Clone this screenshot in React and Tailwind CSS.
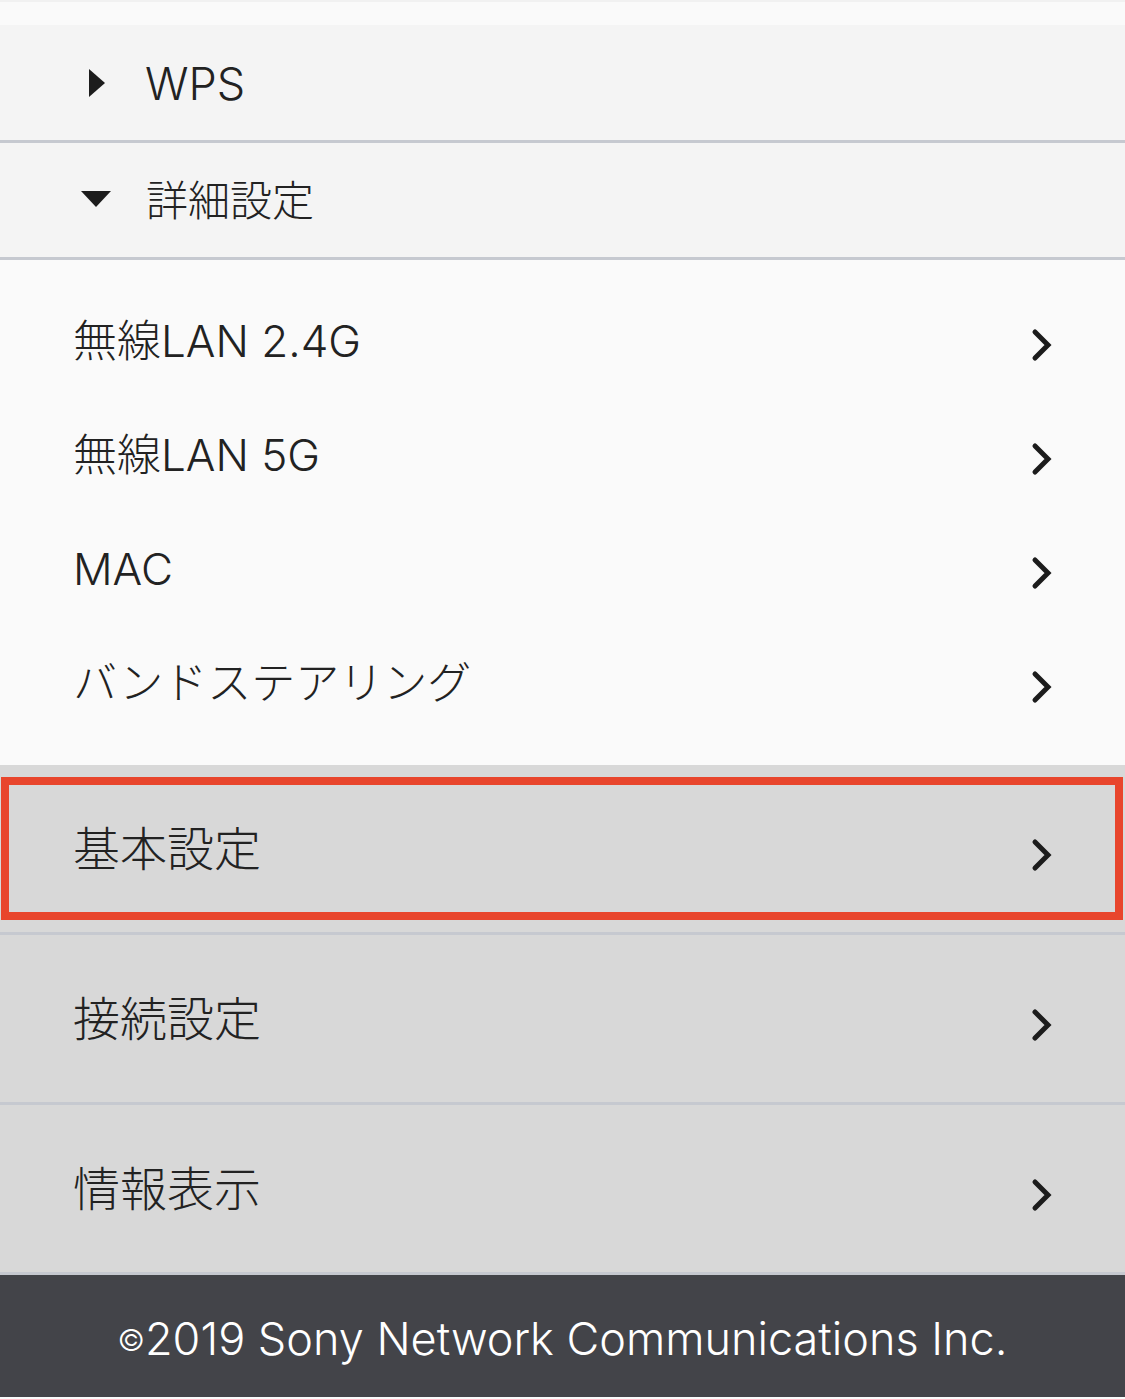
import React from "react";

const font = { fontFamily: 'Inter, "Noto Sans CJK JP", sans-serif' };

function Chevron() {
  return (
    <svg width="26" height="36" viewBox="0 0 26 36" className="shrink-0">
      <polyline
        points="6,5 19,18 6,31"
        fill="none"
        stroke="#1c1c1c"
        strokeWidth="5"
        strokeLinecap="round"
        strokeLinejoin="miter"
      />
    </svg>
  );
}

function SubItem({ label }) {
  return (
    <div className="flex items-center justify-between h-[114px] pl-[73px] pr-[70px]">
      <span className="mt-[2px] text-[44px] leading-none text-[#222] font-light">{label}</span>
      <div className="mt-[10px]">
        <Chevron />
      </div>
    </div>
  );
}

function MenuRow({ label, highlight }) {
  return (
    <div className="relative flex items-center justify-between h-[170px] bg-[#d8d8d8] border-b-[3px] border-[#c6c9d0] pl-[73px] pr-[70px]">
      <span className="text-[47px] leading-none text-[#222] font-light">{label}</span>
      <div className="mt-[12px]">
        <Chevron />
      </div>
      {highlight && (
        <div className="absolute top-[12px] bottom-[12px] left-[1px] right-[2px] border-[8px] border-[#e8452c]" />
      )}
    </div>
  );
}

export default function App() {
  const subItems = ["無線LAN 2.4G", "無線LAN 5G", "MAC", "バンドステアリング"];

  return (
    <div className="w-[1125px] h-[1399px] bg-[#fafafa] overflow-hidden" style={font}>
      <div className="h-[2px] bg-[#f1f1f1]" />
      <div className="h-[23px] bg-[#fafafa]" />

      <div className="flex items-center h-[118px] bg-[#f4f4f4] border-b-[3px] border-[#c6c9d0] pl-[88px]">
        <svg width="18" height="30" viewBox="0 0 18 30">
          <polygon points="1,1 17,15 1,29" fill="#1c1c1c" />
        </svg>
        <span className="ml-[39px] mt-[2px] text-[45px] leading-none text-[#222] font-light">WPS</span>
      </div>

      <div className="flex items-center h-[117px] bg-[#f4f4f4] border-b-[3px] border-[#c6c9d0] pl-[81px]">
        <svg width="30" height="18" viewBox="0 0 30 18" className="mb-[2px]">
          <polygon points="0,1 30,1 15,17" fill="#1c1c1c" />
        </svg>
        <span className="ml-[35px] mt-[2px] text-[42px] leading-none text-[#222] font-light">詳細設定</span>
      </div>

      <div className="bg-[#fafafa] pt-[23px] pb-[26px]">
        {subItems.map((s) => (
          <SubItem key={s} label={s} />
        ))}
      </div>

      <MenuRow label="基本設定" highlight />
      <MenuRow label="接続設定" />
      <MenuRow label="情報表示" />

      <div className="flex items-center justify-center h-[122px] bg-[#434449]">
        <span className="mt-[4px] text-[45px] leading-none text-white font-light">
          <span className="text-[30px] align-[4px]">©</span>2019 Sony Network Communications Inc.
        </span>
      </div>
    </div>
  );
}
